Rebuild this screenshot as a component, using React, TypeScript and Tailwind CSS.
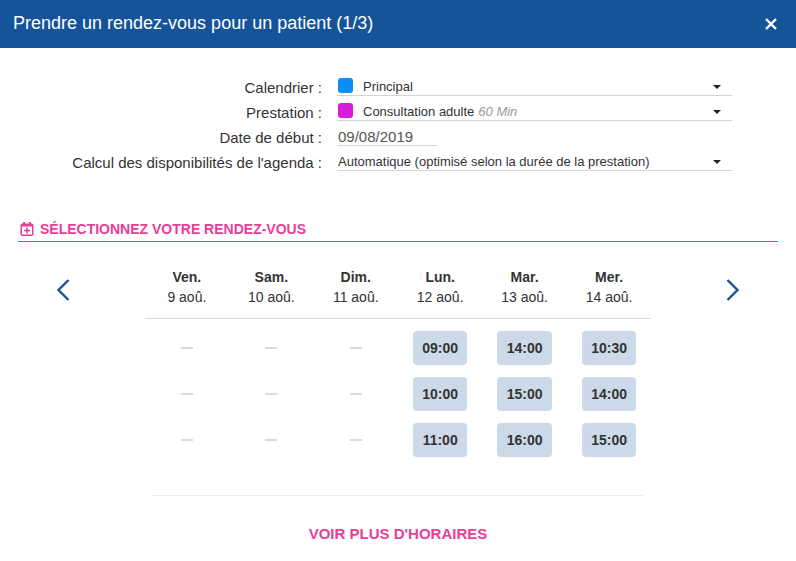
import React from 'react';

const days = [
  { name: 'Ven.', date: '9 aoû.', slots: [] },
  { name: 'Sam.', date: '10 aoû.', slots: [] },
  { name: 'Dim.', date: '11 aoû.', slots: [] },
  { name: 'Lun.', date: '12 aoû.', slots: ['09:00', '10:00', '11:00'] },
  { name: 'Mar.', date: '13 aoû.', slots: ['14:00', '15:00', '16:00'] },
  { name: 'Mer.', date: '14 aoû.', slots: ['10:30', '14:00', '15:00'] },
];

const rows = [0, 1, 2];

const FormRow: React.FC<{ id: string; label: string; children: React.ReactNode }> = ({ id, label, children }) => (
  <div className="grid grid-cols-[2fr_3fr] h-[25px]">
    <label htmlFor={id} className="text-right text-[15px] leading-[25px] pt-1 whitespace-nowrap">
      {label} :
    </label>
    <div className="pl-[15px] pr-[46px]">{children}</div>
  </div>
);

const Caret: React.FC = () => (
  <svg className="ml-auto mr-[11px] shrink-0 pointer-events-none" width="8" height="4" viewBox="0 0 8 4" aria-hidden="true">
    <path d="M0 0h8L4 4z" fill="#222" />
  </svg>
);

const SelectField: React.FC<{ id: string; value: string; swatch?: string; note?: string }> = ({ id, value, swatch, note }) => (
  <div className="flex items-center h-[23px] mt-[2px] pt-[5px] pl-px border-b border-[#d4d4d4]">
    {swatch && <span className={`size-[15px] rounded-[3px] mr-[10px] mb-[2px] shrink-0 ${swatch}`}></span>}
    <select id={id} className="appearance-none bg-transparent text-[13px] leading-4 [field-sizing:content] outline-none">
      <option>{value}</option>
    </select>
    {note && <em className="ml-1 text-[13px] leading-4 text-[#999]">{note}</em>}
    <Caret />
  </div>
);

const AgendaIcon: React.FC = () => (
  <svg width="14" height="14" viewBox="0 0 14 14" fill="none" stroke="currentColor" aria-hidden="true">
    <rect x="1.25" y="2.25" width="11.5" height="11" rx="1" strokeWidth="1.5" />
    <path d="M1 3.5h12" strokeWidth="2" />
    <path d="M4 0v3M10 0v3" strokeWidth="2" />
    <path d="M7 5.5v6M4 8.5h6" strokeWidth="1.6" />
  </svg>
);

const SlotTable: React.FC = () => (
  <table className="w-full table-fixed border-collapse text-[14px]">
    <thead>
      <tr className="border-b border-[#d9dcdf]">
        {days.map((day) => (
          <th key={day.name} scope="col" className="pb-[11px] leading-5 font-normal">
            <span className="block font-bold">{day.name}</span>
            <span className="block">{day.date}</span>
          </th>
        ))}
      </tr>
    </thead>
    <tbody className="before:block before:h-[6px]">
      {rows.map((row) => (
        <tr key={row}>
          {days.map((day) => (
            <td key={day.name} className="px-[15px] py-[6px] h-[46px]">
              {day.slots[row] ? (
                <button type="button" className="block w-full h-[34px] rounded-[4px] bg-[#ccd9e8] font-bold">
                  {day.slots[row]}
                </button>
              ) : (
                <span className="block mx-auto w-3 h-[2px] bg-[#d8dcdf]"></span>
              )}
            </td>
          ))}
        </tr>
      ))}
    </tbody>
  </table>
);

const App: React.FC = () => {
  return (
    <div className="min-h-screen bg-white text-[#333] font-['Liberation_Sans',Arial,sans-serif]">
      <header className="flex items-center justify-between h-12 pl-[13px] pr-[19px] bg-[#16549a] text-white">
        <h1 className="text-[18px] leading-6 pb-[2px]">Prendre un rendez-vous pour un patient (1/3)</h1>
        <button type="button" aria-label="Fermer">
          <svg width="12" height="12" viewBox="0 0 12 12" stroke="currentColor" strokeWidth="2.4">
            <path d="M1 1l10 10M11 1L1 11" />
          </svg>
        </button>
      </header>

      <main className="px-[18px] pt-[23px] pb-4">
        <form>
          <FormRow id="calendrier" label="Calendrier">
            <SelectField id="calendrier" value="Principal" swatch="bg-[#0b8ff2]" />
          </FormRow>
          <FormRow id="prestation" label="Prestation">
            <SelectField id="prestation" value="Consultation adulte" swatch="bg-[#d91bdb]" note="60 Min" />
          </FormRow>
          <FormRow id="debut" label="Date de début">
            <input
              id="debut"
              type="text"
              defaultValue="09/08/2019"
              className="block w-[100px] h-[23px] mt-[2px] pt-1 pl-px text-[15px] text-[#555] border-b border-[#d4d4d4] outline-none"
            />
          </FormRow>
          <FormRow id="calcul" label="Calcul des disponibilités de l'agenda">
            <SelectField id="calcul" value="Automatique (optimisé selon la durée de la prestation)" />
          </FormRow>
        </form>

        <h2 className="flex items-center gap-[6px] mt-12 pl-[2px] h-[23px] pb-[2px] border-b border-[#d9409a] text-[14px] font-bold text-[#e83e98]">
          <AgendaIcon />
          SÉLECTIONNEZ VOTRE RENDEZ-VOUS
        </h2>

        <section className="grid grid-cols-[1fr_4fr_1fr] items-start pt-[25px]">
          <button type="button" aria-label="Jours précédents" className="justify-self-start ml-[38px] mt-[11px] text-[#16549a]">
            <svg width="14" height="24" viewBox="0 0 14 24" fill="none" stroke="currentColor" strokeWidth="2.4">
              <path d="M12.5 2L2.5 12l10 10" />
            </svg>
          </button>
          <SlotTable />
          <button type="button" aria-label="Jours suivants" className="justify-self-end mr-[38px] mt-[11px] text-[#16549a]">
            <svg width="14" height="24" viewBox="0 0 14 24" fill="none" stroke="currentColor" strokeWidth="2.4">
              <path d="M1.5 2l10 10-10 10" />
            </svg>
          </button>
          <div className="col-start-2 mx-2 mt-8 pt-[26px] border-t border-[#ececec] text-center">
            <button type="button" className="text-[15px] leading-5 font-bold text-[#e83e98]">
              VOIR PLUS D'HORAIRES
            </button>
          </div>
        </section>
      </main>
    </div>
  );
};

export default App;
